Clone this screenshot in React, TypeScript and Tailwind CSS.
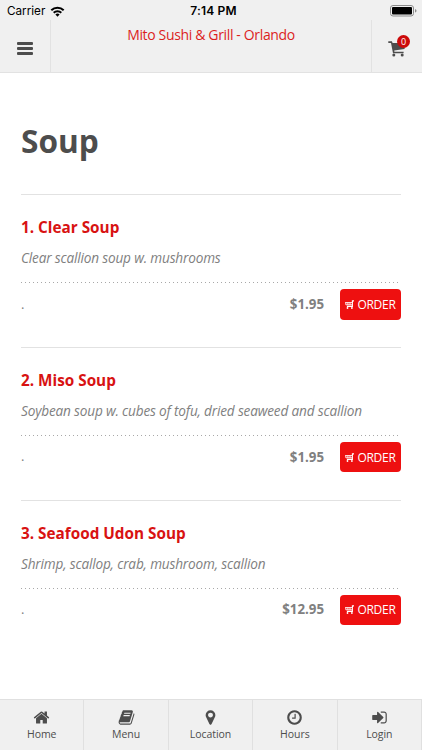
import React from "react";

const paths = {
  home: "M1472 992v480q0 26-19 45t-45 19h-384v-384h-256v384h-384q-26 0-45-19t-19-45v-480q0-1 .5-3t.5-3l575-474 575 474q1 2 1 6zm223-69l-62 74q-8 9-21 11h-3q-13 0-21-7l-692-577-692 577q-12 8-24 7-13-2-21-11l-62-74q-8-10-7-23.5t11-21.5l719-599q32-26 76-26t76 26l244 204v-195q0-14 9-23t23-9h192q14 0 23 9t9 23v408l219 182q10 8 11 21.5t-7 23.5z",
  book: "M1703 478q40 57 18 129l-275 906q-19 64-76.5 107.5t-122.5 43.5h-923q-77 0-148.5-53.5t-99.5-131.5q-24-67-2-127 0-4 3-27t4-37q1-8-3-21.5t-3-19.5q2-11 8-21t16.5-23.5 16.5-23.5q23-38 45-91.5t30-91.5q3-10 .5-30t-.5-28q3-11 17-28t17-23q21-36 42-92t25-90q1-9-2.5-32t.5-28q4-13 22-30.5t22-22.5q19-26 42.5-84.5t27.5-96.5q1-8-3-25.5t-2-26.5q2-8 9-18t18-23 17-21q8-12 16.5-30.5t15-35 16-36 19.5-32 26.5-23.5 36-11.5 47.5 5.5l-1 3q38-9 51-9h761q74 0 114 56t18 130l-274 906q-36 119-71.5 153.5t-128.5 34.5h-869q-27 0-38 15-11 16-1 43 24 70 144 70h923q29 0 56-15.5t35-41.5l300-987q7-22 5-57 38 15 59 43zm-1064 2q-4 13 2 22.5t20 9.5h608q13 0 25.5-9.5t16.5-22.5l21-64q4-13-2-22.5t-20-9.5h-608q-13 0-25.5 9.5t-16.5 22.5zm-83 256q-4 13 2 22.5t20 9.5h608q13 0 25.5-9.5t16.5-22.5l21-64q4-13-2-22.5t-20-9.5h-608q-13 0-25.5 9.5t-16.5 22.5z",
  marker: "M1152 640q0-106-75-181t-181-75-181 75-75 181 75 181 181 75 181-75 75-181zm256 0q0 109-33 179l-364 774q-16 33-47.5 52t-67.5 19-67.5-19-46.5-52l-365-774q-33-70-33-179 0-212 150-362t362-150 362 150 150 362z",
  clock: "M1024 544v448q0 14-9 23t-23 9h-320q-14 0-23-9t-9-23v-64q0-14 9-23t23-9h224v-352q0-14 9-23t23-9h64q14 0 23 9t9 23zm416 352q0-148-73-273t-198-198-273-73-273 73-198 198-73 273 73 273 198 198 273 73 273-73 198-198 73-273zm224 0q0 209-103 385.5t-279.5 279.5-385.5 103-385.5-103-279.5-279.5-103-385.5 103-385.5 279.5-279.5 385.5-103 385.5 103 279.5 279.5 103 385.5z",
  login: "M1312 896q0 26-19 45l-544 544q-19 19-45 19t-45-19-19-45v-288h-448q-26 0-45-19t-19-45v-384q0-26 19-45t45-19h448v-288q0-26 19-45t45-19 45 19l544 544q19 19 19 45zm352-352v704q0 119-84.5 203.5t-203.5 84.5h-320q-13 0-22.5-9.5t-9.5-22.5q0-4-1-20t-.5-26.5 3-23.5 10-19.5 20.5-6.5h320q66 0 113-47t47-113v-704q0-66-47-113t-113-47h-312l-11.5-1-11.5-3-8-5.5-7-9-2-13.5q0-4-1-20t-.5-26.5 3-23.5 10-19.5 20.5-6.5h320q119 0 203.5 84.5t84.5 203.5z",
};

const tabs: { label: string; icon: keyof typeof paths }[] = [
  { label: "Home", icon: "home" },
  { label: "Menu", icon: "book" },
  { label: "Location", icon: "marker" },
  { label: "Hours", icon: "clock" },
  { label: "Login", icon: "login" },
];

const items = [
  { name: "1. Clear Soup", desc: "Clear scallion soup w. mushrooms", price: "$1.95" },
  { name: "2. Miso Soup", desc: "Soybean soup w. cubes of tofu, dried seaweed and scallion", price: "$1.95" },
  { name: "3. Seafood Udon Soup", desc: "Shrimp, scallop, crab, mushroom, scallion", price: "$12.95" },
];

function StatusBar() {
  return (
    <div className="grid h-5 grid-cols-3 items-center pt-0.5 font-['Inter','Liberation_Sans',sans-serif] text-[12px] leading-[18px] text-black">
      <div className="flex items-center gap-[5px] pl-[7px]">
        <span className="text-[11.7px]">Carrier</span>
        <svg width="15" height="11" viewBox="0 0 14 11" fill="none" stroke="#000" strokeWidth="2">
          <path d="M.8 4.2a8.8 8.8 0 0 1 12.4 0" />
          <path d="M3.2 6.8a5.4 5.4 0 0 1 7.6 0" />
          <path d="M7 10.8 4.9 8.6a3 3 0 0 1 4.2 0z" fill="#000" stroke="none" />
        </svg>
      </div>
      <div className="pl-[5px] text-center font-semibold tracking-[0.2px]">7:14 PM</div>
      <div className="flex justify-end pr-[5px]">
        <svg width="27" height="12" viewBox="0 0 27 12">
          <rect x=".5" y=".5" width="23" height="10.5" rx="2.5" fill="none" stroke="#8b8b8b" />
          <rect x="2" y="2" width="20" height="7.5" rx="1" fill="#000" />
          <path d="M25 4q1.5.4 1.5 1.8T25 7.6z" fill="#8b8b8b" />
        </svg>
      </div>
    </div>
  );
}

function CartIcon() {
  return (
    <svg width="17" height="16" viewBox="0 0 17 16" fill="#4d4d4d">
      <path d="M.3.3h3.6L4.6 2h12v6L6.2 9.6l.2 1.1h9.2v1.6H5L3 2H.3z" />
      <circle cx="5.8" cy="14" r="1.5" />
      <circle cx="14.2" cy="14" r="1.5" />
    </svg>
  );
}

function OrderIcon() {
  return (
    <svg width="9" height="9" viewBox="0 0 9 9" fill="none" stroke="#fff">
      <path d="M9 .9H7.4v5.5H1.9" strokeWidth="1.1" />
      <path d="M.2 2.6h6.8M.9 4.8h6.2M.8 2.4v2.4M2.9 2.6v2.2M5 2.6v2.2" strokeWidth=".9" />
      <circle cx="2.5" cy="8" r=".9" fill="#fff" stroke="none" />
      <circle cx="6.9" cy="8" r=".9" fill="#fff" stroke="none" />
    </svg>
  );
}

export default function App() {
  return (
    <div className="flex h-[750px] w-[422px] flex-col overflow-hidden bg-white font-['Open_Sans','Noto_Sans',sans-serif] text-[#4d4d4d]">
      <header className="h-[73px] shrink-0 border-b border-[#e2e2e2] bg-[#f0f0f0]">
        <StatusBar />
        <div className="flex h-[52px]">
          <div className="flex w-[51px] flex-col justify-center gap-[2px] border-r border-[#e2e2e2] pl-[17px] pt-[5px]">
            <i className="h-[3px] w-4 rounded-[1px] bg-[#4d4d4d]" />
            <i className="h-[3px] w-4 rounded-[1px] bg-[#4d4d4d]" />
            <i className="h-[3px] w-4 rounded-[1px] bg-[#4d4d4d]" />
          </div>
          <h1 className="flex-1 pt-[5px] text-center text-[14px] leading-5 tracking-[-0.35px] text-[#dc1e1e]">Mito Sushi &amp; Grill - Orlando</h1>
          <div className="w-[51px] border-l border-[#e2e2e2] pl-4 pt-[21px]">
            <div className="relative w-[17px]">
              <CartIcon />
              <span className="absolute -top-[6px] left-[9px] flex h-[13px] w-[13px] items-center justify-center rounded-full bg-[#cc0a0a] text-[9px] leading-none text-white">0</span>
            </div>
          </div>
        </div>
      </header>
      <main className="flex-1 px-[21px] pt-[45px]">
        <h2 className="h-[76px] text-[31.6px] font-bold leading-[46px] text-[#4d4d4d]">Soup</h2>
        {items.map((item) => (
          <section key={item.name} className="h-[152.8px] border-t border-[#e2e2e2] pt-[21px]">
            <h3 className="text-[15.3px] font-bold leading-[22px] text-[#d81212]">{item.name}</h3>
            <p className="mt-[9px] whitespace-nowrap text-[13.6px] italic leading-[21px] tracking-[-0.17px] text-[#808080]">{item.desc}</p>
            <div className="mt-[14px] h-px bg-[linear-gradient(90deg,#a8a8a8_1.5px,transparent_1.5px)] bg-[length:4px_1px]" />
            <div className="flex items-center pt-[6px] text-[#808080]">
              <span className="flex-1 text-[13px]">.</span>
              <span className="mr-4 pt-px text-[13.3px] font-bold">{item.price}</span>
              <button className="flex h-[30.5px] w-[61px] items-center justify-center gap-[3px] rounded-[4px] bg-[#ee1010] text-[12px] tracking-[-0.3px] text-white">
                <OrderIcon />
                <span className="pt-px">ORDER</span>
              </button>
            </div>
          </section>
        ))}
      </main>
      <nav className="grid h-[51px] shrink-0 grid-cols-5 border-t border-[#e0e0e0] bg-[#f0f0f0]">
        {tabs.map((tab) => (
          <div key={tab.label} className="flex flex-col items-center border-r border-[#e0e0e0] pt-[9px] text-[10.5px] leading-4 tracking-[-0.05px]">
            <svg width="17" height="17" viewBox="0 0 1792 1792" fill="#4d4d4d">
              <path d={paths[tab.icon]} />
            </svg>
            <span>{tab.label}</span>
          </div>
        ))}
      </nav>
    </div>
  );
}
